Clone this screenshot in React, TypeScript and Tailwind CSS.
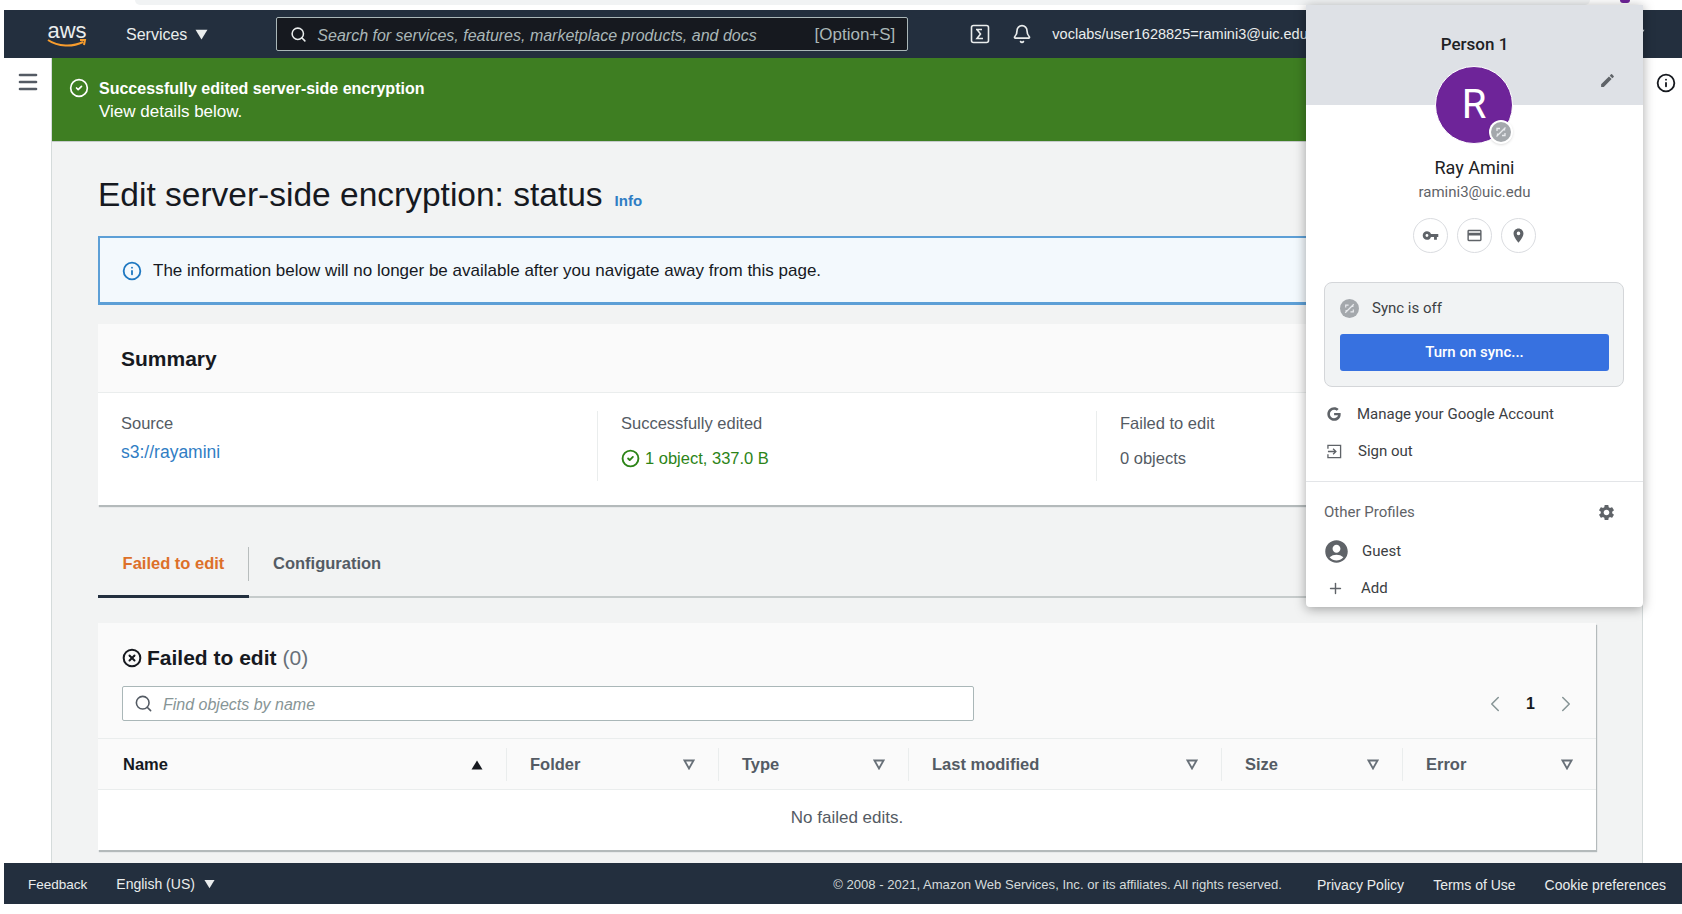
import React from "react";
import { Bell, ChevronLeft, ChevronRight, CircleCheck, CircleX, Info, Menu, Plus, Search } from "lucide-react";
import { FaGoogle } from "react-icons/fa";
import { MdAccountCircle, MdCreditCard, MdEdit, MdPlace, MdSettings, MdVpnKey } from "react-icons/md";

const sans = "font-['Liberation_Sans',Arial,sans-serif]";
const chrome = "font-['Roboto',sans-serif]";

const Caret = ({ className = "" }: { className?: string }) => (
  <svg viewBox="0 0 12 10" className={className} fill="currentColor">
    <path d="M0.5 0.5h11L6 9.5z" />
  </svg>
);

const FilterCaret = () => (
  <svg viewBox="0 0 12 11" className="h-[11px] w-[12px] text-[#687078]" fill="none" stroke="currentColor" strokeWidth="1.8">
    <path d="M1.5 1.5h9L6 9.5z" />
  </svg>
);

const SyncOff = ({ className = "" }: { className?: string }) => (
  <svg viewBox="0 0 20 20" className={className}>
    <circle cx="10" cy="10" r="10" fill="#a4a8ac" />
    <path d="M5.5 14.5 14.5 5.5M6 9V6.5h3M14 11v2.5h-3M6.5 11.5v2M13.5 8.5v-2" stroke="#e8eaed" strokeWidth="1.3" fill="none" />
  </svg>
);

const columns = [
  { label: "Name", sorted: true },
  { label: "Folder" },
  { label: "Type" },
  { label: "Last modified" },
  { label: "Size" },
  { label: "Error" },
];

const ProfilePopup = () => (
  <div className={`absolute left-[1306px] top-[5px] h-[602px] w-[337px] rounded-b-[4px] bg-white text-[#3c4043] shadow-[0_2px_12px_rgba(0,0,0,0.35)] ${chrome}`}>
    <div className="relative h-[100px] bg-[#dee1e6]">
      <div className="pt-[28px] text-center text-[17px] leading-[22px] font-medium text-[#202124]">Person 1</div>
      <MdEdit className="absolute left-[293px] top-[67px] text-[#5f6368]" size={17} />
    </div>
    <div className="absolute left-[129px] top-[61px] flex h-[78px] w-[78px] items-center justify-center rounded-full border-[1px] border-white bg-[#6e2499] text-[40px] text-white">
      R
      <span className="absolute left-[53px] top-[53px] flex h-[24px] w-[24px] items-center justify-center rounded-full bg-white shadow-sm">
        <SyncOff className="h-[20px] w-[20px]" />
      </span>
    </div>
    <div className="pt-[51px] text-center text-[18px] leading-[24px] text-[#202124]">Ray Amini</div>
    <div className="pt-[1px] text-center text-[15px] leading-[22px] text-[#5f6368]">ramini3@uic.edu</div>
    <div className="mt-[15px] flex justify-center gap-[9px]">
      {[MdVpnKey, MdCreditCard, MdPlace].map((Icon, i) => (
        <span key={i} className="flex h-[35px] w-[35px] items-center justify-center rounded-full border border-[#dadce0] bg-white text-[#5f6368]">
          <Icon size={17} />
        </span>
      ))}
    </div>
    <div className="mx-[18px] mt-[29px] h-[105px] w-[300px] rounded-[8px] border border-[#d4d6d9] bg-[#f1f3f4] px-[15px] pt-[15px]">
      <div className="flex h-[20px] items-center gap-[13px] text-[15px]">
        <SyncOff className="h-[19px] w-[19px]" />
        <span>Sync is off</span>
      </div>
      <div className="mt-[16px] flex h-[37px] w-[269px] items-center justify-center rounded-[3px] bg-[#3771e0] text-[15px] font-medium text-white">
        Turn on sync...
      </div>
    </div>
    <div className="mt-[8px] flex h-[38px] items-center gap-[16px] pl-[21px] text-[15px]">
      <FaGoogle className="text-[#5f6368]" size={14} />
      <span>Manage your Google Account</span>
    </div>
    <div className="flex h-[36px] items-center gap-[16px] pl-[21px] text-[15px]">
      <svg viewBox="0 0 16 16" className="h-[15px] w-[15px] text-[#5f6368]" fill="none" stroke="currentColor" strokeWidth="1.4">
        <path d="M1 5V1.5h13.5v13H1V11M1 8h8M6.5 5 9.5 8l-3 3" />
      </svg>
      <span>Sign out</span>
    </div>
    <div className="mt-[12px] border-t border-[#e3e5e8]" />
    <div className="flex h-[60px] items-center justify-between pl-[18px] pr-[27px] text-[15px] text-[#5f6368]">
      <span>Other Profiles</span>
      <MdSettings size={19} />
    </div>
    <div className="-mt-[3px] flex h-[24px] items-center gap-[12px] pl-[17px] text-[15px]">
      <MdAccountCircle className="text-[#5f6368]" size={27} />
      <span>Guest</span>
    </div>
    <div className="mt-[13px] flex h-[24px] items-center gap-[17px] pl-[21px] text-[15px]">
      <Plus className="text-[#5f6368]" size={17} />
      <span>Add</span>
    </div>
  </div>
);

export default function App() {
  return (
    <div className={`relative flex h-[914px] w-[1682px] flex-col overflow-hidden bg-white ${sans}`}>
      {/* browser chrome sliver */}
      <div className="flex h-[10px] items-start pl-[135px] pr-[52px]">
        <div className="h-[5px] flex-1 rounded-b-[8px] bg-[#f1f3f4]" />
        <div className="ml-[30px] h-[3px] w-[10px] rounded-b-full bg-[#6e2499]" />
      </div>

      <div className="flex min-h-0 flex-1 flex-col pl-[4px]">
        {/* top nav */}
        <header className="flex h-[48px] items-center bg-[#232f3e] text-[#eaeded]">
          <div className="relative ml-[43px] -mt-[6px] w-[40px] text-center text-[22px] leading-[22px]">
            aws
            <svg viewBox="0 0 40 10" className="absolute left-0 top-[18px] h-[10px] w-[40px]" fill="none" stroke="#f79c2d" strokeWidth="2">
              <path d="M1 2c10 7 25 7 35 2M33 2h5l-1 5" />
            </svg>
          </div>
          <span className="ml-[39px] pt-[2px] text-[16px]">Services</span>
          <Caret className="ml-[8px] h-[11px] w-[13px]" />
          <div className="ml-[68px] flex h-[34px] w-[632px] items-center rounded-[2px] border border-[#aab7b8] bg-[#16191f] pl-[13px] pr-[12px]">
            <Search size={17} strokeWidth={2.2} className="text-[#eaeded]" />
            <span className="ml-[10px] pt-[3px] text-[16px] italic text-[#aab7b8]">Search for services, features, marketplace products, and docs</span>
            <span className="ml-auto pt-[1px] text-[17px] text-[#aab7b8]">[Option+S]</span>
          </div>
          <svg viewBox="0 0 20 20" className="ml-[62px] h-[20px] w-[20px]" fill="none" stroke="currentColor" strokeWidth="1.6">
            <rect x="1.5" y="1.5" width="17" height="17" rx="2" />
            <path d="M6 5.5h6M7 5.5l3.5 4.5L7 14.5h6" />
          </svg>
          <Bell size={20} className="ml-[22px]" />
          <span className="ml-[20px] whitespace-nowrap pt-[1px] text-[14.5px]">voclabs/user1628825=ramini3@uic.edu</span>
          <Caret className="ml-auto mr-[37px] h-[11px] w-[13px]" />
        </header>

        <div className="flex min-h-0 flex-1">
          {/* side rail */}
          <aside className="w-[47px] pl-[12px] pt-[12px] text-[#545b64]">
            <Menu size={24} strokeWidth={2.6} />
          </aside>

          <main className="w-[1592px] border-x border-[#d5dbdb] bg-[#f2f3f3]">
            <div className="flex h-[84px] border-b border-[#c6cbcb] bg-[#3e7e22] pl-[17px] pt-[19px] text-white">
              <CircleCheck size={20} strokeWidth={2} className="mt-[1px]" />
              <div className="ml-[10px] text-[16px] leading-[23px]">
                <div className="font-bold">Successfully edited server-side encryption</div>
                <div className="text-[17px]">View details below.</div>
              </div>
            </div>

            <div className="pl-[46px] pr-[46px]">
              <div className="flex h-[94px] items-start pt-[31px]">
                <h1 className="text-[33.5px] leading-[44px] text-[#16191f]">Edit server-side encryption: status</h1>
                <span className="ml-[12px] mt-[17px] text-[15px] font-bold text-[#2f7dc4]">Info</span>
              </div>

              <div className="flex h-[69px] items-center border-2 border-b-[3px] border-[#5d9fd6] bg-[#f3f9fd] pl-[22px] pt-[2px] text-[17px] text-[#16191f]">
                <Info size={20} strokeWidth={2.2} className="text-[#1f78c1]" />
                <span className="ml-[11px]">The information below will no longer be available after you navigate away from this page.</span>
              </div>

              {/* summary card */}
              <section className="mt-[19px] h-[181px] bg-white shadow-[1px_2px_1px_#b4babb]">
                <div className="flex h-[69px] items-center border-b border-[#eaeded] bg-[#fafafa] pl-[23px] pt-[2px] text-[21px] font-bold text-[#16191f]">Summary</div>
                <div className="grid grid-cols-[499px_499px_1fr] pt-[18px] text-[16.5px]">
                  <div className="h-[70px] pl-[23px]">
                    <div className="leading-[24px] text-[#545b64]">Source</div>
                    <div className="mt-[5px] text-[17.5px] leading-[24px] text-[#2f7dc4]">s3://rayamini</div>
                  </div>
                  <div className="h-[70px] border-l border-[#eaeded] pl-[23px]">
                    <div className="leading-[24px] text-[#545b64]">Successfully edited</div>
                    <div className="mt-[11px] flex items-center gap-[5px] leading-[24px] text-[#2c8417]">
                      <CircleCheck size={19} strokeWidth={2.4} />
                      1 object, 337.0 B
                    </div>
                  </div>
                  <div className="h-[70px] border-l border-[#eaeded] pl-[23px]">
                    <div className="leading-[24px] text-[#545b64]">Failed to edit</div>
                    <div className="mt-[11px] leading-[24px] text-[#545b64]">0 objects</div>
                  </div>
                </div>
              </section>

              {/* tabs */}
              <div className="mt-[42px] flex h-[51px] border-b-2 border-[#c6cbcb] text-[16.5px] font-bold">
                <div className="relative flex h-[51px] w-[151px] items-center justify-center border-b-[3px] border-[#232f3e] pb-[16px] text-[#dd7029]">
                  Failed to edit
                  <span className="absolute right-0 top-0 h-[34px] border-r border-[#b8bdbd]" />
                </div>
                <div className="flex h-[49px] items-center pb-[16px] pl-[24px] text-[#545b64]">Configuration</div>
              </div>

              {/* failed objects table */}
              <section className="mt-[25px] h-[227px] bg-white shadow-[1px_2px_1px_#b4babb]">
                <div className="h-[116px] border-b border-[#eaeded] bg-[#fafafa] px-[24px] pt-[20px]">
                  <div className="flex items-center text-[21px] font-bold leading-[30px] text-[#16191f]">
                    <CircleX size={20} strokeWidth={2.4} />
                    <span className="ml-[5px]">Failed to edit</span>
                    <span className="ml-[6px] font-normal text-[#687078]">(0)</span>
                  </div>
                  <div className="mt-[13px] flex items-center justify-between">
                    <div className="flex h-[35px] w-[852px] items-center rounded-[2px] border border-[#aab7b8] bg-white pl-[11px]">
                      <Search size={19} className="text-[#545b64]" />
                      <span className="ml-[10px] pt-[2px] text-[16px] italic text-[#879596]">Find objects by name</span>
                    </div>
                    <div className="-mr-[7px] flex items-center gap-[18px] text-[#879596]">
                      <ChevronLeft size={26} strokeWidth={1.4} />
                      <span className="text-[16px] font-bold text-[#16191f]">1</span>
                      <ChevronRight size={26} strokeWidth={1.4} />
                    </div>
                  </div>
                </div>
                <div className="grid h-[51px] grid-cols-[408px_212px_190px_313px_181px_1fr] items-center border-b border-[#eaeded] bg-[#fafafa] pt-[1px] text-[16.5px] font-bold">
                  {columns.map((col, i) => (
                    <div key={col.label} className={`flex h-[33px] items-center justify-between pr-[23px] ${i > 0 ? "border-l border-[#eaeded] pl-[23px]" : "pl-[25px]"}`}>
                      <span className={col.sorted ? "text-[#16191f]" : "text-[#545b64]"}>{col.label}</span>
                      {col.sorted ? <Caret className="h-[10px] w-[12px] rotate-180 text-[#16191f]" /> : <FilterCaret />}
                    </div>
                  ))}
                </div>
                <div className="flex h-[56px] items-center justify-center text-[17px] text-[#545b64]">No failed edits.</div>
              </section>
            </div>
          </main>

          <aside className="flex-1 pl-[13px] pt-[15px] text-[#16191f]">
            <Info size={20} strokeWidth={2.2} />
          </aside>
        </div>

        {/* footer */}
        <footer className="flex h-[41px] items-center bg-[#232f3e] pl-[24px] pr-[16px] pt-[3px] text-[14px] text-[#eaeded]">
          <span className="pt-[1px] text-[13.5px]">Feedback</span>
          <span className="ml-[29px] -mt-[2px] text-[14px]">English (US)</span>
          <Caret className="ml-[9px] -mt-[2px] h-[10px] w-[11px]" />
          <span className="ml-auto text-[13.1px] text-[#d5dbdb]">© 2008 - 2021, Amazon Web Services, Inc. or its affiliates. All rights reserved.</span>
          <span className="ml-[35px]">Privacy Policy</span>
          <span className="ml-[29px]">Terms of Use</span>
          <span className="ml-[29px]">Cookie preferences</span>
        </footer>
      </div>
      <div className="h-[10px]" />

      <ProfilePopup />
    </div>
  );
}
